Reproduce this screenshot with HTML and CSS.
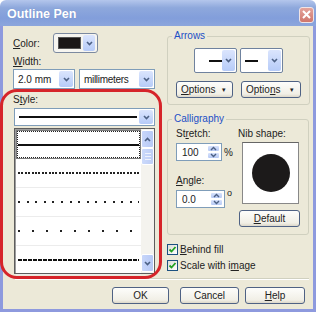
FILE: index.html
```html
<!DOCTYPE html>
<html lang="en">
<head>
  <meta charset="UTF-8">
  <title>Outline Pen</title>
  <link rel="stylesheet" href="styles.css">
</head>
<body>
  <div class="window">
    <div class="titlebar">
      <span class="title">Outline Pen</span>
      <span class="close">
        <svg width="9" height="9" viewBox="0 0 9 9"><path d="M1 1L8 8M8 1L1 8" stroke="#fff" stroke-width="2"/></svg>
      </span>
    </div>

    <div class="frame">
      <div class="main">
        <div class="left">
          <div class="color-row">
            <span class="lbl-inline"><u>C</u>olor:</span>
            <div class="swatch-btn">
              <span class="swatch"></span>
              <span class="drop small"><svg width="7" height="5" viewBox="0 0 7 5"><path d="M1 1L3.5 3.5L6 1" fill="none" stroke="#4d6185" stroke-width="1.6"/></svg></span>
            </div>
          </div>

          <div class="lbl"><u>W</u>idth:</div>
          <div class="width-row">
            <div class="combo size">2.0 mm
              <span class="drop"><svg width="7" height="5" viewBox="0 0 7 5"><path d="M1 1L3.5 3.5L6 1" fill="none" stroke="#4d6185" stroke-width="1.6"/></svg></span>
            </div>
            <div class="combo unit">millimeters
              <span class="drop"><svg width="7" height="5" viewBox="0 0 7 5"><path d="M1 1L3.5 3.5L6 1" fill="none" stroke="#4d6185" stroke-width="1.6"/></svg></span>
            </div>
          </div>

          <div class="lbl style-lbl">S<u>t</u>yle:</div>
          <div class="combo style-combo">
            <span class="cur-line"></span>
            <span class="drop"><svg width="7" height="5" viewBox="0 0 7 5"><path d="M1 1L3.5 3.5L6 1" fill="none" stroke="#4d6185" stroke-width="1.6"/></svg></span>
          </div>

          <div class="listbox">
            <div class="items">
              <div class="item selected"><span class="pen solid"></span></div>
              <div class="item"><span class="pen dots"></span></div>
              <div class="item"><span class="pen dots-wide"></span></div>
              <div class="item"><span class="pen dots-wider"></span></div>
              <div class="item"><span class="pen dashes"></span></div>
            </div>
            <div class="scrollbar">
              <span class="sb-btn"><svg width="7" height="5" viewBox="0 0 7 5"><path d="M1 4L3.5 1.5L6 4" fill="none" stroke="#4d6185" stroke-width="1.6"/></svg></span>
              <span class="sb-thumb"><i></i><i></i><i></i></span>
              <span class="sb-track"></span>
              <span class="sb-btn"><svg width="7" height="5" viewBox="0 0 7 5"><path d="M1 1L3.5 3.5L6 1" fill="none" stroke="#4d6185" stroke-width="1.6"/></svg></span>
            </div>
          </div>
        </div>

        <div class="right">
          <fieldset class="group arrows">
            <legend>Arrows</legend>
            <div class="arrow-row">
              <div class="combo arrow-combo start">
                <span class="stub"></span>
                <span class="drop"><svg width="7" height="5" viewBox="0 0 7 5"><path d="M1 1L3.5 3.5L6 1" fill="none" stroke="#4d6185" stroke-width="1.6"/></svg></span>
              </div>
              <div class="combo arrow-combo end">
                <span class="stub"></span>
                <span class="drop"><svg width="7" height="5" viewBox="0 0 7 5"><path d="M1 1L3.5 3.5L6 1" fill="none" stroke="#4d6185" stroke-width="1.6"/></svg></span>
              </div>
            </div>
            <div class="options-row">
              <button class="btn opt"><span><u>O</u>ptions</span><span class="tri">&#9662;</span></button>
              <button class="btn opt wide"><span>Optio<u>n</u>s</span><span class="tri">&#9662;</span></button>
            </div>
          </fieldset>

          <fieldset class="group calligraphy">
            <legend>Calligraphy</legend>
            <div class="calli-grid">
              <div class="calli-left">
                <div class="lbl">St<u>r</u>etch:</div>
                <div class="spin-row">
                  <div class="spin">
                    <span class="spin-val">100</span>
                    <span class="spin-btns">
                      <span><svg width="7" height="5" viewBox="0 0 7 5"><path d="M1 4L3.5 1.5L6 4" fill="none" stroke="#4d6185" stroke-width="1.4"/></svg></span>
                      <span><svg width="7" height="5" viewBox="0 0 7 5"><path d="M1 1L3.5 3.5L6 1" fill="none" stroke="#4d6185" stroke-width="1.4"/></svg></span>
                    </span>
                  </div>
                  <span class="unit-sign">%</span>
                </div>
                <div class="lbl angle-lbl"><u>A</u>ngle:</div>
                <div class="spin-row">
                  <div class="spin">
                    <span class="spin-val">0.0</span>
                    <span class="spin-btns">
                      <span><svg width="7" height="5" viewBox="0 0 7 5"><path d="M1 4L3.5 1.5L6 4" fill="none" stroke="#4d6185" stroke-width="1.4"/></svg></span>
                      <span><svg width="7" height="5" viewBox="0 0 7 5"><path d="M1 1L3.5 3.5L6 1" fill="none" stroke="#4d6185" stroke-width="1.4"/></svg></span>
                    </span>
                  </div>
                  <span class="unit-sign deg">o</span>
                </div>
              </div>
              <div class="calli-right">
                <div class="lbl">Nib shape:</div>
                <div class="nib"><span class="nib-dot"></span></div>
                <button class="btn default"><u>D</u>efault</button>
              </div>
            </div>
          </fieldset>

          <label class="check"><span class="box"><svg width="9" height="9" viewBox="0 0 9 9"><path d="M1.5 4.5L3.5 6.5L7.5 2" fill="none" stroke="#21a121" stroke-width="1.8"/></svg></span><span><u>B</u>ehind fill</span></label>
          <label class="check"><span class="box"><svg width="9" height="9" viewBox="0 0 9 9"><path d="M1.5 4.5L3.5 6.5L7.5 2" fill="none" stroke="#21a121" stroke-width="1.8"/></svg></span><span>Scale with i<u>m</u>age</span></label>
        </div>
      </div>

      <div class="separator"></div>

      <div class="buttons">
        <button class="btn ok">OK</button>
        <button class="btn cancel">Cancel</button>
        <button class="btn help"><u>H</u>elp</button>
      </div>
    </div>

    <div class="highlight"></div>
  </div>
</body>
</html>
```

FILE: styles.css
```css
body {
  margin: 0;
  background: #fff;
  font-family: "Liberation Sans", Arial, sans-serif;
  font-size: 10px;
  color: #222;
}
u {
  text-decoration: underline;
  text-underline-offset: 1px;
}
.window {
  position: relative;
  width: 316px;
  height: 314px;
}
.titlebar {
  height: 26px;
  display: flex;
  align-items: center;
  justify-content: space-between;
  padding: 0 2px 0 7px;
  box-sizing: border-box;
  border-radius: 6px 6px 0 0;
  background: linear-gradient(#b4c6ec, #8ea8dc 30%, #829edb 70%, #8ca6dc);
}
.title {
  color: #fff;
  font-weight: bold;
  font-size: 12.5px;
  margin-top: 2px;
  text-shadow: 0 0 1px #6c86c0;
}
.close {
  width: 15px;
  height: 16px;
  margin-top: 3px;
  display: flex;
  align-items: center;
  justify-content: center;
  box-sizing: border-box;
  border: 1px solid #f0e4e6;
  border-radius: 3px;
  background: linear-gradient(#e4a49c, #cf766c);
}
.frame {
  height: 286px;
  box-sizing: border-box;
  border: 3px solid #8e9ade;
  border-top: none;
  background: #ece9d8;
  padding: 7px 6px 0 10px;
}
.main {
  display: flex;
  gap: 12px;
}
.left {
  width: 142px;
}
.right {
  width: 140px;
  margin-top: -3px;
}
.color-row {
  display: flex;
  align-items: center;
  height: 20px;
}
.lbl-inline {
  width: 40px;
}
.lbl {
  line-height: 12px;
  height: 12px;
  margin-top: 3px;
}
.swatch-btn {
  width: 45px;
  height: 20px;
  box-sizing: border-box;
  border: 1px solid #7c8aa0;
  border-radius: 3px;
  background: #f6f5f0;
  display: flex;
  align-items: center;
  padding: 0 2px 0 4px;
  gap: 2px;
}
.swatch {
  width: 24px;
  height: 10px;
  background: #1a1717;
  border: 1px solid #555;
}
.combo {
  position: relative;
  height: 20px;
  box-sizing: border-box;
  border: 1px solid #7f9db9;
  background: #fff;
  display: flex;
  align-items: center;
  padding-left: 4px;
}
.drop {
  position: absolute;
  right: 1px;
  top: 1px;
  bottom: 1px;
  width: 14px;
  display: flex;
  align-items: center;
  justify-content: center;
  border-radius: 2px;
  background: linear-gradient(#dbe5fd, #b6cbf8);
}
.drop.small {
  position: static;
  height: 16px;
  width: 13px;
}
.width-row {
  display: flex;
  gap: 4px;
  margin-top: 1px;
}
.combo.size {
  width: 62px;
}
.combo.unit {
  width: 76px;
  letter-spacing: -0.3px;
}
.style-lbl {
  margin-top: 5px;
  height: 14px;
}
.style-combo {
  width: 141px;
  height: 18px;
  margin-left: 1px;
}
.cur-line {
  width: 118px;
  height: 2px;
  background: #111;
}
.listbox {
  display: flex;
  width: 141px;
  height: 146px;
  margin: 2px 0 0 1px;
  box-sizing: border-box;
  border: 1px solid #5d5d5d;
  box-shadow: inset 1px 1px 0 #9d9d9d;
  background: #fff;
}
.items {
  flex: 1;
  padding: 1px 0 0 1px;
}
.item {
  height: 28px;
  border-bottom: 1px solid #ececec;
  display: flex;
  align-items: center;
  padding-left: 2px;
}
.item.selected {
  border: 1px solid #7a7a7a;
  outline: 1px dotted #222;
  outline-offset: -2px;
  height: 27px;
  padding-left: 1px;
}
.pen {
  display: block;
  width: 121px;
  height: 2px;
}
.pen.solid {
  background: #111;
}
.pen.dots {
  background: repeating-linear-gradient(90deg, #222 0 2px, transparent 2px 3.4px);
}
.pen.dots-wide {
  background: repeating-linear-gradient(90deg, #222 0 2px, transparent 2px 8.6px);
}
.pen.dots-wider {
  background: repeating-linear-gradient(90deg, #222 0 2px, transparent 2px 14px);
}
.pen.dashes {
  background: repeating-linear-gradient(90deg, #111 0 4px, transparent 4px 5px);
}
.scrollbar {
  width: 13px;
  display: flex;
  flex-direction: column;
  background: #f4f3ee;
  padding: 1px 0;
}
.sb-btn {
  height: 16px;
  display: flex;
  align-items: center;
  justify-content: center;
  border: 1px solid #fff;
  border-radius: 2px;
  background: linear-gradient(90deg, #c8d6fa, #b6c9f6);
}
.sb-thumb {
  height: 15px;
  display: flex;
  flex-direction: column;
  align-items: center;
  justify-content: center;
  gap: 2px;
  border: 1px solid #fff;
  border-radius: 2px;
  background: linear-gradient(90deg, #ccdafb, #bccdf6);
}
.sb-thumb i {
  display: block;
  width: 6px;
  height: 1px;
  background: #eef2fc;
}
.sb-track {
  flex: 1;
}
.group {
  margin: 0;
  padding: 0 8px 6px;
  border: 1px solid #d0d0bf;
  border-radius: 3px;
}
.group legend {
  color: #1d4fc6;
  padding: 0 2px;
  margin-left: -4px;
  line-height: 12px;
}
.arrow-row {
  display: flex;
  justify-content: center;
  gap: 3px;
  margin-top: 6px;
}
.arrow-combo {
  width: 43px;
  height: 25px;
  border-radius: 2px;
  border-color: #6f829e;
}
.arrow-combo .drop {
  width: 13px;
}
.stub {
  width: 13px;
  height: 2px;
  background: #111;
}
.arrow-combo.start .stub {
  margin-left: 10px;
}
.arrow-combo.end .stub {
  margin-left: 0;
}
.options-row {
  display: flex;
  gap: 8px;
  margin-top: 8px;
}
.btn {
  font-family: inherit;
  font-size: 10px;
  color: #222;
  height: 17px;
  padding: 0;
  box-sizing: border-box;
  border: 1px solid #4f6284;
  border-radius: 3px;
  background: linear-gradient(#fdfdfb, #f1efe6 80%, #dcd7c9);
}
.btn.opt {
  width: 57px;
  display: flex;
  align-items: center;
  justify-content: space-between;
  padding: 0 6px 0 4px;
}
.btn.opt.wide {
  width: 60px;
}
.tri {
  font-size: 7px;
}
.calligraphy {
  margin-top: 8px;
  padding-bottom: 7px;
}
.calli-grid {
  display: flex;
  gap: 5px;
}
.calli-left {
  width: 57px;
}
.calli-left .lbl {
  margin-top: 3px;
}
.calli-left .angle-lbl {
  margin-top: 14px;
}
.spin-row {
  display: flex;
  align-items: flex-start;
  gap: 2px;
  margin-top: 3px;
}
.spin {
  width: 49px;
  height: 18px;
  box-sizing: border-box;
  border: 1px solid #7f9db9;
  background: #fff;
  display: flex;
  align-items: center;
  justify-content: space-between;
  padding: 0 1px 0 5px;
}
.spin-btns {
  display: flex;
  flex-direction: column;
  width: 13px;
  height: 14px;
}
.spin-btns span {
  flex: 1;
  display: flex;
  align-items: center;
  justify-content: center;
  background: linear-gradient(#d6e1fb, #b7caf5);
  border: 1px solid #fff;
  border-radius: 2px;
}
.unit-sign {
  margin-top: 4px;
}
.unit-sign.deg {
  margin-top: -2px;
  font-size: 9px;
}
.calli-right .lbl {
  margin-top: 3px;
}
.nib {
  width: 57px;
  height: 62px;
  margin: 2px 0 0 4px;
  box-sizing: border-box;
  border: 1px solid #888;
  border-top-color: #666;
  background: #fff;
  display: flex;
  align-items: center;
  justify-content: center;
}
.nib-dot {
  width: 38px;
  height: 38px;
  border-radius: 50%;
  background: #1c1a1a;
}
.btn.default {
  width: 61px;
  margin: 6px 0 0 1px;
}
.check {
  display: flex;
  align-items: center;
  gap: 2px;
  height: 12px;
  margin-top: 8px;
}
.check + .check {
  margin-top: 4px;
}
.box {
  width: 11px;
  height: 11px;
  box-sizing: border-box;
  border: 1px solid #1c5180;
  background: linear-gradient(135deg, #dcdcd7, #fff);
  display: flex;
  align-items: center;
  justify-content: center;
}
.separator {
  margin: 4px 0 0 2px;
  height: 1px;
  background: #d0d0bf;
  border-bottom: 1px solid #fff;
  width: 294px;
}
.buttons {
  display: flex;
  justify-content: flex-end;
  margin-top: 7px;
  padding-right: 2px;
}
.btn.ok {
  width: 57px;
}
.btn.cancel {
  width: 59px;
  margin-left: 11px;
}
.btn.help {
  width: 60px;
  margin-left: 6px;
}
.highlight {
  position: absolute;
  left: 0;
  top: 89px;
  width: 162px;
  height: 190px;
  box-sizing: border-box;
  border: 3px solid #d6242a;
  border-radius: 17px;
}
```
